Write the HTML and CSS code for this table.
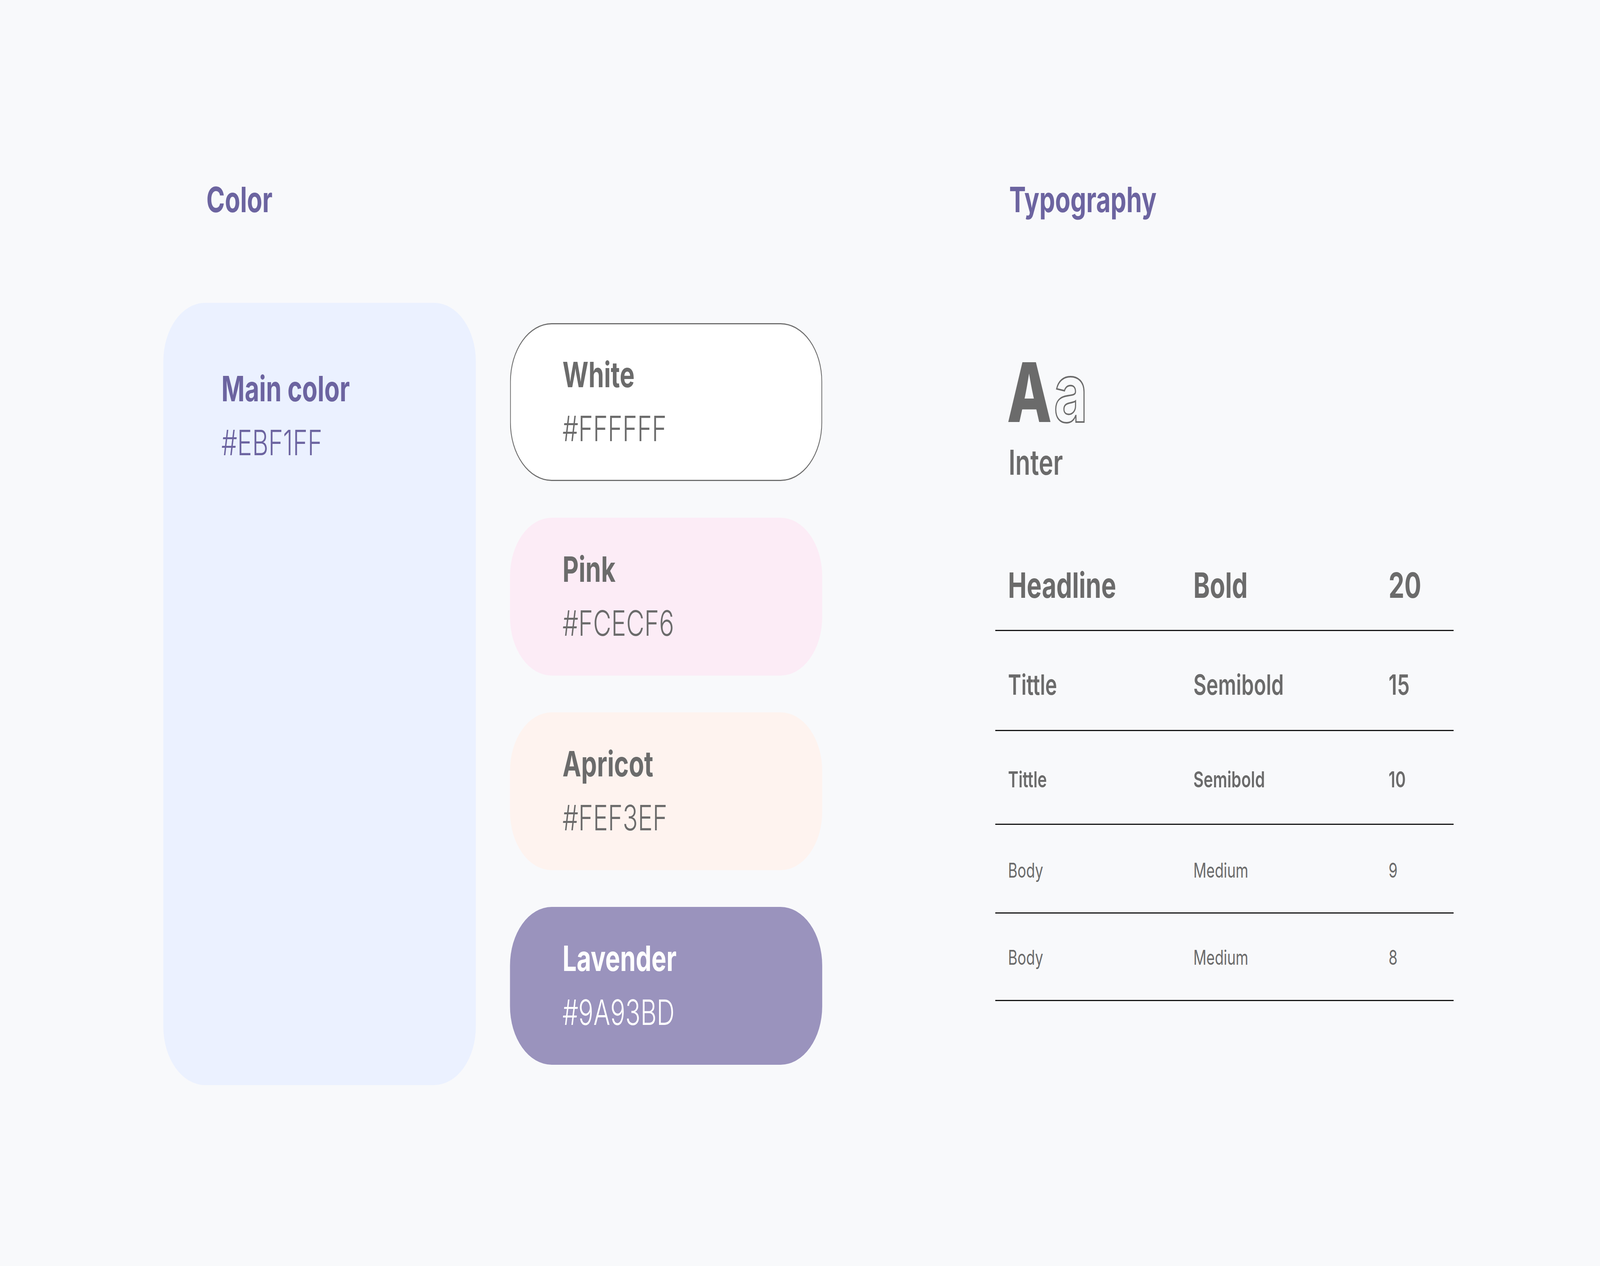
FILE: index.html
```html
<!DOCTYPE html>
<html lang="en">
<head>
<meta charset="utf-8">
<title>Style guide</title>
<link rel="stylesheet" href="styles.css">
</head>
<body>
<div class="viewport">
<div class="stage" id="stage">
<main class="page">
  <section class="color-section">
    <h2 class="section-title color-title">Color</h2>
    <div class="swatches">
      <div class="main-card">
        <div class="swatch-name">Main color</div>
        <div class="swatch-hex">#EBF1FF</div>
      </div>
      <div class="swatch-list">
        <div class="swatch swatch-white">
          <div class="swatch-name">White</div>
          <div class="swatch-hex">#FFFFFF</div>
        </div>
        <div class="swatch swatch-pink">
          <div class="swatch-name">Pink</div>
          <div class="swatch-hex">#FCECF6</div>
        </div>
        <div class="swatch swatch-apricot">
          <div class="swatch-name">Apricot</div>
          <div class="swatch-hex">#FEF3EF</div>
        </div>
        <div class="swatch swatch-lavender">
          <div class="swatch-name">Lavender</div>
          <div class="swatch-hex">#9A93BD</div>
        </div>
      </div>
    </div>
  </section>

  <section class="typo-section">
    <h2 class="section-title typo-title">Typography</h2>
    <div class="aa"><span class="aa-upper">A</span><span class="aa-lower">a</span></div>
    <div class="font-name">Inter</div>
    <div class="type-table">
      <div class="type-row row-20"><span>Headline</span><span>Bold</span><span>20</span></div>
      <div class="type-row row-15"><span>Tittle</span><span>Semibold</span><span>15</span></div>
      <div class="type-row row-10"><span>Tittle</span><span>Semibold</span><span>10</span></div>
      <div class="type-row row-9"><span>Body</span><span>Medium</span><span>9</span></div>
      <div class="type-row row-8"><span>Body</span><span>Medium</span><span>8</span></div>
    </div>
  </section>
</main>
</div>
</div>
<script src="app.js"></script>
</body>
</html>
```
FILE: styles.css
```css
* {
  box-sizing: border-box;
}

html, body {
  margin: 0;
  padding: 0;
  overflow: hidden;
  background: #F8F9FB;
}

body {
  font-family: "Inter", "Liberation Sans", sans-serif;
  color: #6B6B6B;
}

/* The slide is authored at 5760×3240 and scaled to fit the window. */
.viewport {
  width: 100vw;
  height: 100vh;
  overflow: hidden;
}

.stage {
  width: 5760px;
  height: 3240px;
  transform-origin: 0 0;
}

.page {
  display: flex;
  align-items: flex-start;
  gap: 623px;
  padding: 466px 0 0 588px;
}

.section-title {
  margin: 0;
  font-size: 90px;
  line-height: 1;
  font-weight: 700;
  color: #6C64A0;
}

.color-title {
  margin-left: 155px;
}

.swatches {
  display: flex;
  align-items: center;
  gap: 123px;
  margin-top: 219px;
}

.main-card {
  width: 1125px;
  height: 2002px;
  border-radius: 150px;
  background: #EBF1FF;
  padding: 175px 0 0 209px;
  color: #6C64A0;
}

.swatch-list {
  display: flex;
  flex-direction: column;
  gap: 94px;
}

.swatch {
  width: 1124px;
  height: 404px;
  border-radius: 150px;
  padding: 87px 0 0 189px;
}

.swatch-name {
  font-size: 90px;
  line-height: 1;
  font-weight: 700;
}

.swatch-hex {
  font-size: 90px;
  line-height: 1;
  font-weight: 300;
  margin-top: 48px;
}

.swatch-white {
  background: #FFFFFF;
  box-shadow: inset 0 0 0 3px #6E6E6E;
}

.swatch-pink {
  background: #FCECF6;
}

.swatch-apricot {
  background: #FEF3EF;
}

.swatch-lavender {
  background: #9A93BD;
  color: #FFFFFF;
}

/* Typography */
.typo-section {
  width: 1650px;
  display: flex;
  flex-direction: column;
}

.typo-title {
  margin-left: 50px;
}

.aa {
  margin-top: 343px;
  margin-left: 42px;
  font-size: 210px;
  line-height: 1;
  display: flex;
  gap: 7px;
}

.aa-upper {
  font-weight: 800;
}

.aa-lower {
  font-weight: 700;
  color: transparent;
  -webkit-text-stroke: 4px #6B6B6B;
}

.font-name {
  margin-top: 30px;
  margin-left: 48px;
  font-size: 88px;
  line-height: 1;
  font-weight: 600;
}

.type-table {
  margin-top: 226px;
  display: flex;
  flex-direction: column;
}

.type-row {
  display: grid;
  grid-template-columns: 667px 703px 1fr;
  padding-left: 46px;
  border-bottom: 3px solid #141414;
  line-height: 1;
}

.row-20 {
  font-size: 90px;
  font-weight: 700;
  padding-bottom: 69px;
}

.row-15 {
  font-size: 72px;
  font-weight: 600;
  padding-top: 101px;
  padding-bottom: 80px;
}

.row-10 {
  font-size: 57px;
  font-weight: 600;
  padding-top: 95px;
  padding-bottom: 85px;
}

.row-9 {
  font-size: 52px;
  font-weight: 400;
  padding-top: 91px;
  padding-bottom: 81px;
}

.row-8 {
  font-size: 52px;
  font-weight: 400;
  padding-top: 87px;
  padding-bottom: 82px;
}
```
FILE: app.js
```js
(function () {
  var DESIGN_W = 5760;
  var DESIGN_H = 3240;
  var stage = document.getElementById('stage');

  function fit() {
    var sx = window.innerWidth / DESIGN_W;
    var sy = window.innerHeight / DESIGN_H;
    stage.style.transform = 'scale(' + sx + ',' + sy + ')';
  }

  fit();
  window.addEventListener('resize', fit);
})();
```
